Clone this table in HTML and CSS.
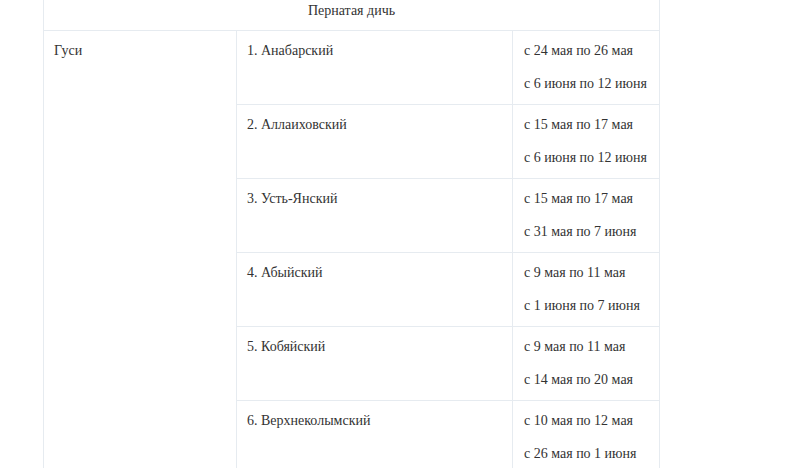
FILE: index.html
```html
<!DOCTYPE html>
<html lang="ru">
<head>
<meta charset="utf-8">
<link rel="stylesheet" href="styles.css">
</head>
<body>
<div class="wrap">
<table class="hunt">
  <tr><td class="head" colspan="3">Пернатая дичь</td></tr>
  <tr>
    <td class="kind" rowspan="6">Гуси</td>
    <td class="area">1. Анабарский</td>
    <td class="dates"><p>с 24 мая по 26 мая</p><p>с 6 июня по 12 июня</p></td>
  </tr>
  <tr>
    <td class="area">2. Аллаиховский</td>
    <td class="dates"><p>с 15 мая по 17 мая</p><p>с 6 июня по 12 июня</p></td>
  </tr>
  <tr>
    <td class="area">3. Усть-Янский</td>
    <td class="dates"><p>с 15 мая по 17 мая</p><p>с 31 мая по 7 июня</p></td>
  </tr>
  <tr>
    <td class="area">4. Абыйский</td>
    <td class="dates"><p>с 9 мая по 11 мая</p><p>с 1 июня по 7 июня</p></td>
  </tr>
  <tr>
    <td class="area">5. Кобяйский</td>
    <td class="dates"><p>с 9 мая по 11 мая</p><p>с 14 мая по 20 мая</p></td>
  </tr>
  <tr>
    <td class="area">6. Верхнеколымский</td>
    <td class="dates"><p>с 10 мая по 12 мая</p><p>с 26 мая по 1 июня</p></td>
  </tr>
</table>
</div>
</body>
</html>
```
FILE: styles.css
```css
html, body {
  margin: 0;
  padding: 0;
  background: #fff;
  overflow: hidden;
}
.wrap {
  margin-top: -10px;
  padding-left: 43px;
}
.hunt {
  border-collapse: collapse;
  width: 617px;
  font-family: "Liberation Serif", "Times New Roman", serif;
  font-size: 14px;
  line-height: 20px;
  color: #333;
}
.hunt td {
  border: 1px solid #e6ebf0;
  padding: 10px 10px 10px 10px;
  vertical-align: top;
  text-align: left;
}
.hunt td.head {
  text-align: center;
  padding: 10px 10px 9px;
}
.hunt td.kind {
  width: 172px;
}
.hunt td.area {
  width: 255px;
  padding-left: 10px;
}
.hunt td.dates {
  padding-left: 11px;
  height: 53px;
}
.hunt p {
  margin: 0 0 13px;
}
.hunt p:last-child {
  margin-bottom: 0;
}
```
